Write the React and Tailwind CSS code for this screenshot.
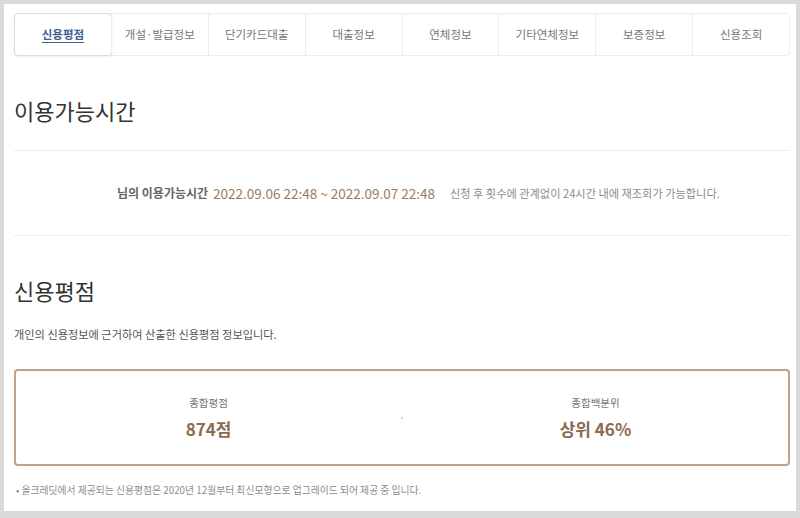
import React from "react";

const tabs = ["신용평점", "개설·발급정보", "단기카드대출", "대출정보", "연체정보", "기타연체정보", "보증정보", "신용조회"];

export default function App() {
  return (
    <div
      className="w-[800px] h-[518px] bg-[#d9d9d9] pt-[4px] pl-[4px] pr-[4px] pb-[7px]"
      style={{ fontFamily: '"Noto Sans CJK KR", "Noto Sans", sans-serif' }}
    >
      <div className="h-full bg-white pl-[10px] pr-[6px] pt-[9px]">
        <div className="flex h-[43px] rounded-[4px] border border-[#ececec]">
          {tabs.map((t, i) => (
            <div
              key={t}
              className={
                i === 0
                  ? "flex-1 flex items-center justify-center rounded-[4px] border border-[#dcdcdc] shadow-[0_1px_2px_rgba(0,0,0,0.08)] -m-px text-[11.5px] font-bold text-[#3e5f93] underline underline-offset-[3px]"
                  : "flex-1 flex items-center justify-center border-l border-[#ececec] first:border-l-0 text-[11.5px] text-[#777]"
              }
            >
              {t}
            </div>
          ))}
        </div>

        <div className="pt-[40px] pb-[26px] border-b border-[#ececec]">
          <h2 className="text-[22px] leading-[28px] text-[#333]">이용가능시간</h2>
        </div>

        <div className="h-[85px] flex items-center border-b border-[#ececec] pl-[103px]">
          <span className="text-[12px] font-bold text-[#666]">님의 이용가능시간</span>
          <span className="ml-[5px] text-[13.5px] text-[#9b7c60]">2022.09.06 22:48 ~ 2022.09.07 22:48</span>
          <span className="ml-[15px] text-[11.2px] text-[#8c8c8c]">신청 후 횟수에 관계없이 24시간 내에 재조회가 가능합니다.</span>
        </div>

        <div className="pt-[40px]">
          <h2 className="text-[22px] leading-[28px] text-[#333]">신용평점</h2>
        </div>
        <p className="mt-[22px] text-[11.2px] leading-[16px] text-[#555]">개인의 신용정보에 근거하여 산출한 신용평점 정보입니다.</p>

        <div className="relative mt-[27px] h-[97px] rounded-[4px] border-2 border-[#bba38e] flex items-center">
          <div className="flex-1 flex flex-col items-center">
            <span className="text-[10.5px] leading-[14px] text-[#777]">종합평점</span>
            <span className="mt-[8px] text-[17px] leading-[22px] font-bold text-[#8b6b50]">874점</span>
          </div>
          <div className="w-[2px] h-[2px] rounded-full bg-[#c8c8c8]" />
          <div className="flex-1 flex flex-col items-center">
            <span className="text-[10.5px] leading-[14px] text-[#777]">종합백분위</span>
            <span className="mt-[8px] text-[17px] leading-[22px] font-bold text-[#8b6b50]">상위 46%</span>
          </div>
        </div>

        <p className="mt-[17px] text-[9.8px] leading-[14px] text-[#8c8c8c] pl-[2px]">
          • 올크레딧에서 제공되는 신용평점은 2020년 12월부터 최신모형으로 업그레이드 되어 제공 중 입니다.
        </p>
      </div>
    </div>
  );
}
